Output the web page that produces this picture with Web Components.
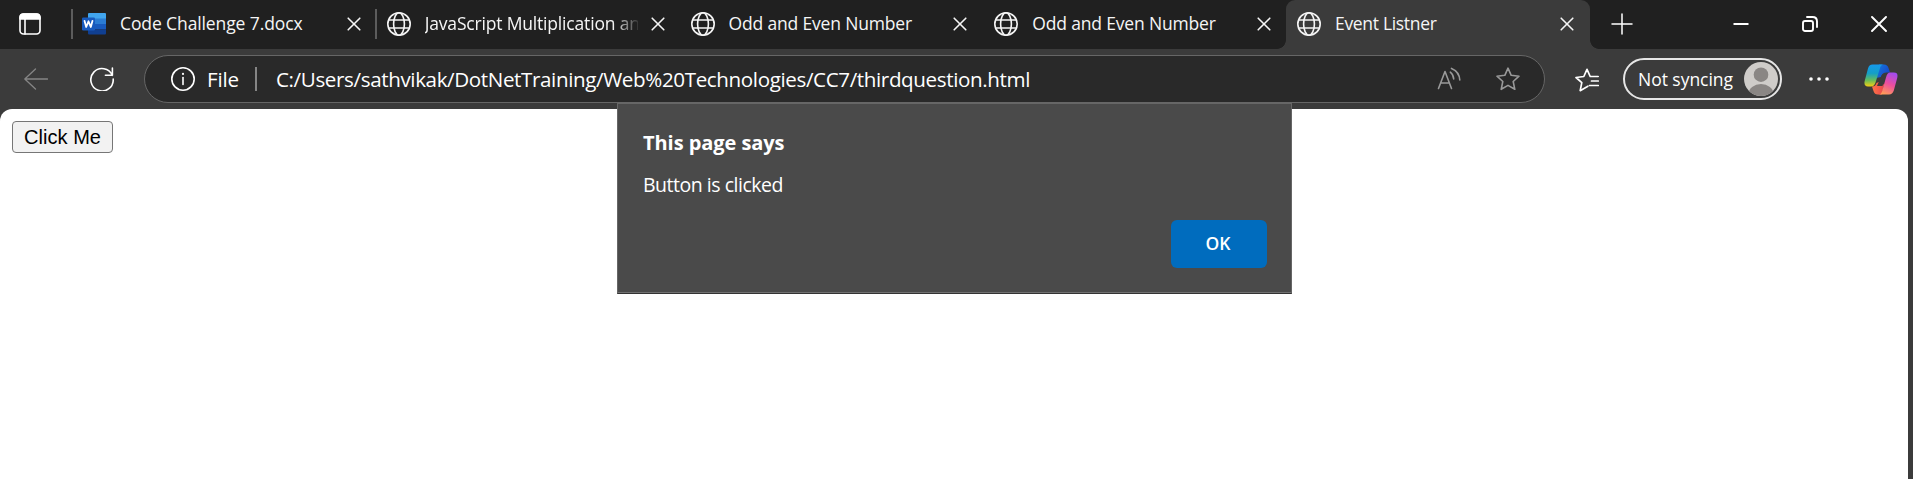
<!DOCTYPE html>
<html lang="en"><head><meta charset="utf-8"><title>Event Listner</title>
<style>
html,body{margin:0;height:100%;overflow:hidden;background:#3b3b3b}
body{font-family:"Open Sans","Noto Sans",sans-serif;color:#fff}
</style></head><body>
<browser-window></browser-window>
<script>
const define=(name,html,after)=>customElements.define(name,class extends HTMLElement{
  connectedCallback(){
    if(this.shadowRoot)return;
    const t=document.createElement('template');
    t.innerHTML=typeof html==='function'?html(this):html;
    this.attachShadow({mode:'open'}).append(t.content.cloneNode(true));
    if(after)after(this);
  }
});

const svg=(w,h,body)=>`<svg width="${w}" height="${h}" viewBox="0 0 ${w} ${h}" fill="none" stroke="currentColor" stroke-width="1.6" stroke-linecap="round" stroke-linejoin="round">${body}</svg>`;
const STAR='M12 1.2L15.2 8.3L23 9.2L17.2 14.5L18.8 22.3L12 18.4L5.2 22.3L6.8 14.5L1 9.2L8.8 8.3Z';
const icons={
  tabs:svg(22,22,'<rect x="1" y="1" width="20" height="20" rx="3.5"/><path d="M1 6V4.500Q1 1 4.500 1H17.500Q21 1 21 4.500V6Z" fill="currentColor"/><path d="M6 6V21"/>'),
  globe:svg(24,24,'<circle cx="12" cy="12" r="11.2"/><ellipse cx="12" cy="12" rx="5.400" ry="11.2"/><path d="M1.700 8H22.300M1.700 16H22.300"/>'),
  word:svg(24,22,'<g stroke="none"><path d="M7 0H23Q24 0 24 1V6H6V1Q6 0 7 0Z" fill="#41a5ee"/><path d="M6 5.500H24V11H6Z" fill="#2b7cd3"/><path d="M6 11H24V16.500H6Z" fill="#185abd"/><path d="M6 16.500H24V20.500Q24 21.500 23 21.500H7Q6 21.500 6 20.500Z" fill="#103f91"/><rect x="0" y="4.500" width="13" height="13" rx="1.300" fill="#185abd"/></g><path d="M2.500 7.800L4.200 14L6.500 8.300L8.800 14L10.500 7.800" stroke="#fff" stroke-width="1.800"/>'),
  close:svg(14,14,'<path d="M1.200 1.200L12.800 12.800M12.800 1.200L1.200 12.800"/>'),
  plus:svg(22,22,'<path d="M11 1V21M1 11H21" stroke-width="1.500"/>'),
  min:svg(16,16,'<path d="M.5 8H15.500" stroke-width="2" stroke-linecap="butt"/>'),
  restore:svg(16,16,'<rect x="1" y="5" width="10" height="10" rx="2" stroke-width="1.900"/><path d="M5 1H10.500Q15 1 15 5.500V11" stroke-width="1.900"/>'),
  exit:svg(16,16,'<path d="M1 1L15 15M15 1L1 15" stroke-width="1.900"/>'),
  back:svg(24,22,'<path d="M23.500 11H.8M11.500 1L.8 11L11.500 21" stroke-width="1.300"/>'),
  reload:svg(24,24,'<path d="M22.300 8.300A11.200 11.200 0 1 0 23.200 12M22.400 1V8.200H15.400"/>'),
  info:svg(24,24,'<circle cx="12" cy="12" r="11.2"/><path d="M12 10.500V17.500"/><circle cx="12" cy="6.900" r="1.100" fill="currentColor" stroke="none"/>'),
  read:svg(24,24,'<path d="M1.500 21.500L8 4.500L14.500 21.500M3.800 16H12.200M13.300 5.200Q16.500 7.600 16.700 12M14.500 1.400Q22.300 4.600 22.800 13"/>'),
  star:svg(24,24,`<path d="${STAR}"/>`),
  fav:svg(24,24,'<path d="M12.800 18.300L12 18.800L5.200 22.700L6.800 14.700L1 9.500L8.800 8.500L12 1.300L15.200 8.500H23.200M16.500 13H23.300M14.500 17.500H23.300" stroke-width="1.700"/>'),
  avatar:svg(34,34,'<g stroke="none"><clipPath id="c"><circle cx="17" cy="17" r="17"/></clipPath><g clip-path="url(#c)"><rect width="34" height="34" fill="#cfccc9"/><circle cx="17" cy="12.700" r="7.300" fill="#8a8684"/><ellipse cx="17" cy="32" rx="12.500" ry="10" fill="#8a8684"/></g></g>'),
  dots:svg(20,4,'<g fill="currentColor" stroke="none"><circle cx="2" cy="2" r="1.800"/><circle cx="10" cy="2" r="1.800"/><circle cx="18" cy="2" r="1.800"/></g>'),
  copilot:svg(34,31,`<defs><linearGradient id="a" x1="0" y1="0" x2="0" y2="1"><stop offset="0" stop-color="#1599ed"/><stop offset=".4" stop-color="#149fc7"/><stop offset=".72" stop-color="#68bd58"/><stop offset="1" stop-color="#f4ce12"/></linearGradient><linearGradient id="b" x1=".7" y1="0" x2=".3" y2="1"><stop offset="0" stop-color="#a24bed"/><stop offset=".5" stop-color="#ed4e9d"/><stop offset="1" stop-color="#ff9d57"/></linearGradient><linearGradient id="d" x1="0" y1="0" x2="1" y2=".6"><stop offset="0" stop-color="#147fe0"/><stop offset="1" stop-color="#1745c8"/></linearGradient><linearGradient id="e"><stop offset="0" stop-color="#ff7546"/><stop offset="1" stop-color="#e9454d"/></linearGradient></defs><g stroke="none"><path d="M15 .5H20Q23.500 .5 24.500 4L26 8.500H22.500Q18.500 8.500 17 13L12 14Z" fill="url(#d)"/><path d="M8 22.500Q11.500 22.500 12.500 19L17 17L20 21L18 30.500H14Q10.500 30.500 9.500 27Z" fill="url(#e)"/><path d="M17.500 11.500Q18.500 9 21 9H22.500L18.500 22H13Z" fill="#3b3b3b"/><path d="M8.500 .5H19.500Q17 .5 16 4L11.700 18Q10.300 22.500 7 22.500H4Q-.5 22.500 .7 17L4 4.500Q5 .5 8.500 .5Z" fill="url(#a)"/><path d="M26 8.500H30Q34.500 8.500 33.200 14L29.800 26.500Q28.500 30.500 25 30.500H14.500Q17.200 30.500 18.200 27L22 13.500Q23.300 8.500 26 8.500Z" fill="url(#b)"/></g>`)
};

define('ui-icon',el=>`<style>:host{display:block;flex:none}svg{display:block}</style>${icons[el.getAttribute('name')]}`);

/* A line of text spaced out so that it fills the width given in "w". */
define('fit-text',`<style>:host{display:block;flex:none;white-space:pre}span{display:inline-block}</style><span><slot></slot></span>`,el=>{
  const s=el.shadowRoot.querySelector('span'),w=+el.getAttribute('w');
  s.style.letterSpacing=((w-s.getBoundingClientRect().width)/(el.textContent.length))+'px';
});

define('browser-tab',el=>`<style>
:host{display:flex;align-items:center;box-sizing:border-box;width:303.75px;height:49px;padding:0 15px 1px 12px;font-size:17.5px;color:#f5f5f5;position:relative}
:host([icon]){padding:0 14px 1px 11px}
:host([divided])::before{content:"";position:absolute;left:0;top:9px;width:2px;height:30px;background:#5c5c5c}
:host([fade]){padding:0 14px 1px 12px}
:host([active]){background:#3b3b3b;border-radius:9px 9px 0 0;padding:0 16px 1px 11px}
:host([active])::before,:host([active])::after{content:"";position:absolute;bottom:0;width:9px;height:9px}
:host([active])::before{left:-9px;background:radial-gradient(circle at 0 0,transparent 8.5px,#3b3b3b 9.2px)}
:host([active])::after{right:-9px;background:radial-gradient(circle at 100% 0,transparent 8.500px,#3b3b3b 9.2px)}
.t{flex:1;overflow:hidden;margin:0 13px 2px 14px;line-height:30px}
:host([fade]) .t{-webkit-mask-image:linear-gradient(90deg,#000 188px,transparent 216px);mask-image:linear-gradient(90deg,#000 188px,transparent 216px)}
</style><ui-icon name="${el.getAttribute('icon')||'globe'}"></ui-icon><div class="t"><slot></slot></div><ui-icon name="close"></ui-icon>`);

define('tab-strip',`<style>
:host{display:flex;height:49px;background:#202020}
.m{width:71px;display:flex;align-items:center;padding-left:19px;box-sizing:border-box;padding-bottom:1px}
.r{flex:1;display:flex;align-items:center;padding:0 26px 2px 21px;}
.w{margin-left:auto;display:flex;gap:53px}
</style><div class="m"><ui-icon name="tabs"></ui-icon></div>
<browser-tab icon="word" divided><fit-text w="182.5">Code Challenge 7.docx</fit-text></browser-tab>
<browser-tab divided fade><fit-text w="215">JavaScript Multiplication an</fit-text></browser-tab>
<browser-tab><fit-text w="183.5">Odd and Even Number</fit-text></browser-tab>
<browser-tab><fit-text w="183.5">Odd and Even Number</fit-text></browser-tab>
<browser-tab active><fit-text w="101.5">Event Listner</fit-text></browser-tab>
<div class="r"><ui-icon name="plus"></ui-icon><div class="w"><ui-icon name="min"></ui-icon><ui-icon name="restore"></ui-icon><ui-icon name="exit"></ui-icon></div></div>`);

define('address-bar',`<style>
:host{display:flex;align-items:center;box-sizing:border-box;width:1401px;height:48px;border:1.500px solid #666;border-radius:24px;background:#292929;padding:0 24px 0 26px;font-size:20.6px}
i{width:2px;height:24px;background:#858585;margin:0 19px 0 16px}
fit-text{line-height:44px;padding-bottom:1px}
.f{margin-left:12px}.g{margin-left:auto;color:#999;display:flex;gap:35px}
</style><ui-icon name="info"></ui-icon><fit-text class="f" w="32">File</fit-text><i></i>
<fit-text w="754">C:/Users/sathvikak/DotNetTraining/Web%20Technologies/CC7/thirdquestion.html</fit-text>
<div class="g"><ui-icon name="read"></ui-icon><ui-icon name="star"></ui-icon></div>`);

define('profile-pill',`<style>
:host{display:flex;align-items:center;box-sizing:border-box;width:159px;height:42px;border:2px solid #e6e6e6;border-radius:21px;padding:0 2px 0 13px;font-size:17.5px;justify-content:space-between}
fit-text{line-height:30px;padding-bottom:1px}
</style><fit-text w="95">Not syncing</fit-text><ui-icon name="avatar"></ui-icon>`);

define('tool-bar',`<style>
:host{display:flex;align-items:center;height:60px;box-sizing:border-box;background:#3b3b3b;padding:0 15px 0 24px}
.b{color:#858585}.r{margin:0 30px 0 42px}.f{margin:2px 24px 0 30px}.d{margin:0 35px 0 27px}
</style><ui-icon class="b" name="back"></ui-icon><ui-icon class="r" name="reload"></ui-icon>
<address-bar></address-bar><ui-icon class="f" name="fav"></ui-icon><profile-pill></profile-pill>
<ui-icon class="d" name="dots"></ui-icon><ui-icon name="copilot"></ui-icon>`);

define('page-view',`<style>
:host{display:block;flex:1;background:#fff;border-radius:12px 12px 0 0;margin-right:5px;padding:12px}
button{display:flex;justify-content:center;box-sizing:border-box;width:101px;height:32px;padding:0;border:1px solid #767676;border-radius:4px;background:#f2f2f2;color:#000;font:20px/30px "Liberation Sans",Arial,sans-serif}
</style><button><fit-text w="77">Click Me</fit-text></button>`);

define('alert-dialog',`<style>
:host{position:absolute;left:617px;top:102px;width:675px;height:192px;box-sizing:border-box;background:#4a4a4a;border:1px solid #666;border-top-width:2px;border-bottom:1px solid #333;box-shadow:inset 0 -1px #707070;padding:25px 24px 25px 25px;display:flex;flex-direction:column}
h1{margin:0;font-size:20px;font-weight:700;line-height:28px}
p{margin:14px 0 0;font-size:19.5px;line-height:28px}
button{align-self:flex-end;margin-top:auto;width:96px;height:48px;border:0;border-radius:6px;background:#006cbe;color:#fff;font:600 17.500px "Open Sans",sans-serif;display:flex;align-items:center;justify-content:center;padding:0 2px 2px 0}
</style><h1><fit-text w="141.5">This page says</fit-text></h1><p><fit-text w="140">Button is clicked</fit-text></p><button><fit-text w="25">OK</fit-text></button>`);

define('browser-window',`<style>:host{display:flex;flex-direction:column;width:1913px;height:479px;position:relative;overflow:hidden}</style>
<tab-strip></tab-strip><tool-bar></tool-bar><page-view></page-view><alert-dialog></alert-dialog>`);
</script></body></html>
